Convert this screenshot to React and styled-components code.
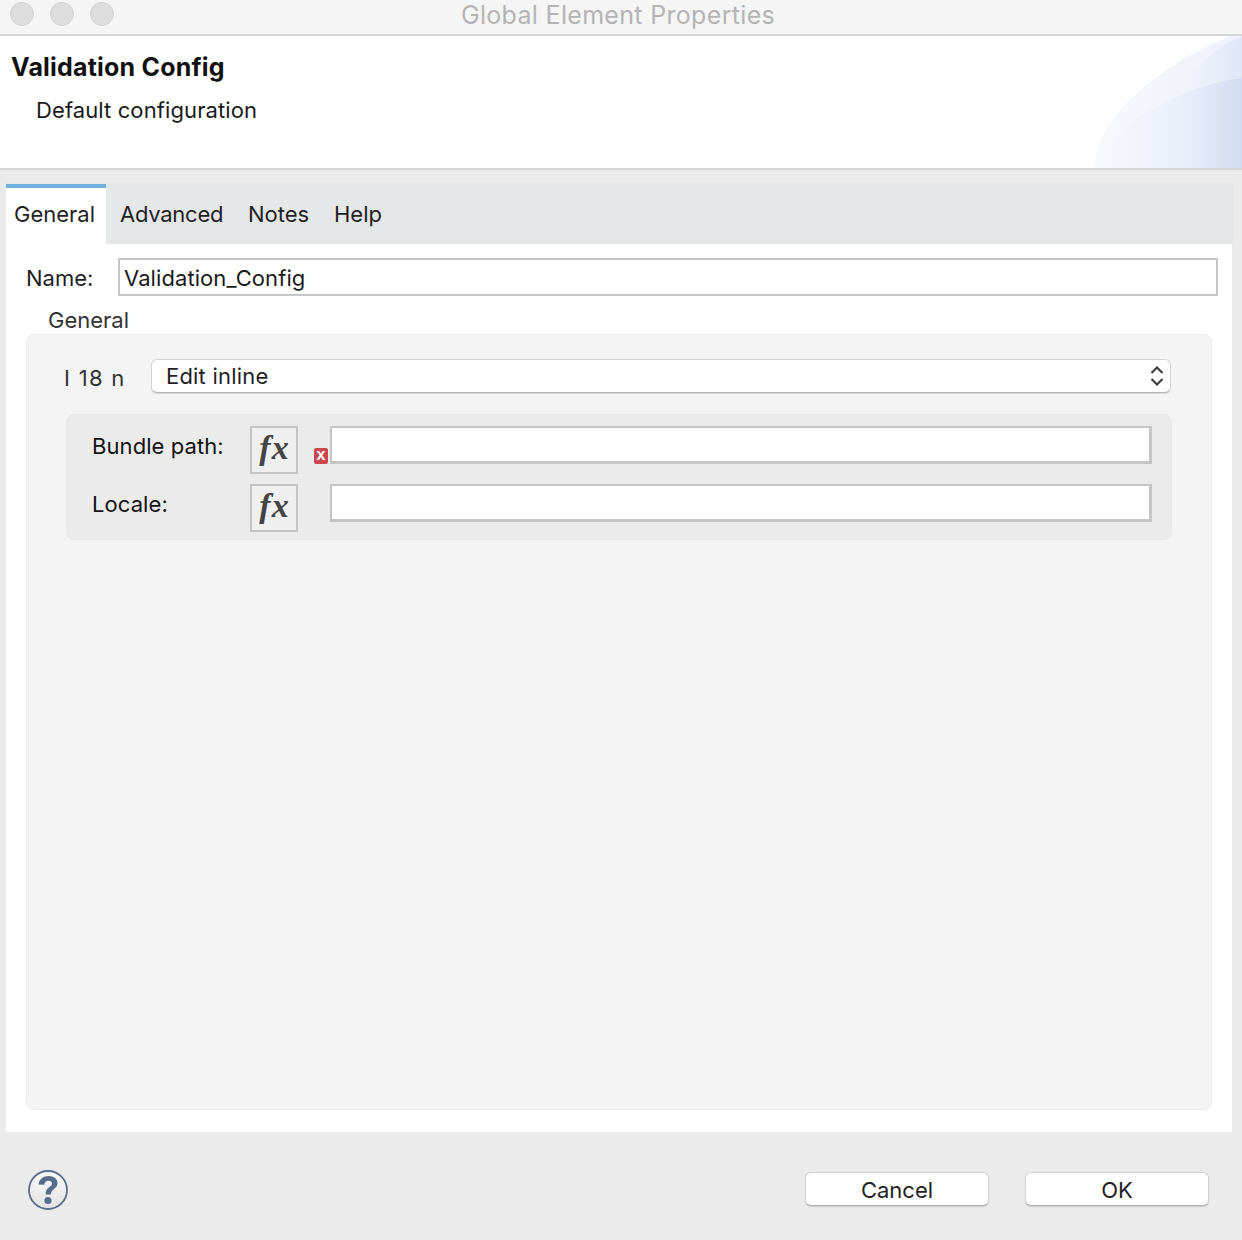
import React from 'react'
import styled, { createGlobalStyle } from 'styled-components'

const Global = createGlobalStyle`
	html, body {
		margin: 0;
		padding: 0;
		background: #ebebeb;
	}
	* {
		box-sizing: border-box;
	}
`

const Window = styled.div`
	width: 1242px;
	height: 1240px;
	display: flex;
	flex-direction: column;
	overflow: hidden;
	background: #ebebeb;
	font-family: Inter, "Liberation Sans", sans-serif;
	font-size: 22px;
	color: #1f1f1f;
`

const TitleBar = styled.div`
	position: relative;
	height: 36px;
	flex: none;
	display: flex;
	align-items: flex-start;
	gap: 16px;
	padding: 2px 0 0 10px;
	background: #f5f5f5;
	border-bottom: 2px solid #d6d6d6;
`

const Light = styled.span`
	width: 24px;
	height: 24px;
	border-radius: 50%;
	background: #dcdcdc;
	border: 1px solid #d2d2d2;
`

const WindowTitle = styled.div`
	position: absolute;
	left: 0;
	right: 6px;
	top: 0;
	text-align: center;
	font-size: 25px;
	line-height: 30px;
	letter-spacing: 0.32px;
	color: #b4b4b4;
`

const Header = styled.header`
	position: relative;
	height: 134px;
	flex: none;
	padding: 16px 12px 0;
	background: #fff;
	border-bottom: 2px solid #d4d4d4;
	overflow: hidden;
`

const Swoosh = styled.svg`
	position: absolute;
	right: 0;
	bottom: 0;
`

const Title = styled.h1`
	margin: 0 0 0 -1px;
	font-size: 25px;
	line-height: 30px;
	font-weight: 700;
	letter-spacing: 0.2px;
	color: #111;
`

const Subtitle = styled.p`
	margin: 13px 0 0 24px;
	font-size: 22px;
	line-height: 30px;
	letter-spacing: 0.1px;
	color: #1a1a1a;
`

const Main = styled.main`
	flex: none;
	margin: 12px 10px 0 6px;
	display: flex;
	flex-direction: column;
`

const TabStrip = styled.div`
	height: 62px;
	display: flex;
	align-items: flex-end;
	background: #e6e7e9;
	margin-right: -1px;
`

const Tab = styled.div`
	height: 60px;
	width: ${p => p.$width}px;
	padding: ${p => (p.$active ? '13px 0 0 8px' : '17px 0 0 0')};
	margin-left: ${p => p.$offset || 0}px;
	background: ${p => (p.$active ? '#fff' : 'transparent')};
	border-top: ${p => (p.$active ? '4px solid #6fb0dc' : 'none')};
	letter-spacing: ${p => p.$tracking || 0}px;
	line-height: 26px;
	white-space: nowrap;
`

const Panel = styled.section`
	height: 888px;
	padding: 14px 14px 0 20px;
	background: #fff;
`

const NameRow = styled.div`
	display: flex;
	align-items: center;
	height: 38px;
`

const NameLabel = styled.label`
	width: 92px;
	flex: none;
	padding-top: 1px;
`

const TextField = styled.div`
	flex: 1;
	height: 38px;
	padding: 0 4px;
	line-height: 36px;
	letter-spacing: 0.08px;
	background: #fff;
	border: 2px solid #c6c6c6;
	color: #1a1a1a;
`

const GroupLabel = styled.div`
	margin: 10px 0 0 22px;
	height: 26px;
	line-height: 28px;
	color: #333;
`

const Group = styled.div`
	height: 776px;
	margin: 2px 6px 0 0;
	padding: 24px 40px 0 37px;
	background: #f4f4f4;
	border: 1px solid #ececec;
	border-radius: 8px;
`

const SelectRow = styled.div`
	display: flex;
	align-items: center;
	height: 34px;
`

const SelectLabel = styled.span`
	width: 87px;
	flex: none;
	letter-spacing: 1.3px;
	padding-top: 4px;
	color: #333;
`

const Select = styled.div`
	flex: 1;
	height: 34px;
	display: flex;
	align-items: center;
	justify-content: space-between;
	padding: 0 6px 0 14px;
	letter-spacing: 0.2px;
	background: #fff;
	border-radius: 6px;
	border: 1px solid #d4d4d4;
	border-bottom-color: #b4b4b4;
	box-shadow: 0 1px 1px rgba(0, 0, 0, 0.12);
`

const Inset = styled.div`
	height: 126px;
	margin: 21px -1px 0 2px;
	padding: 11px 19px 0 25px;
	display: flex;
	flex-direction: column;
	gap: 10px;
	background: #ebebeb;
	border: 1px solid #e8e8e8;
	border-radius: 8px;
`

const FieldRow = styled.div`
	display: flex;
	align-items: flex-start;
	height: 48px;
`

const FieldLabel = styled.label`
	width: 158px;
	flex: none;
	padding-top: 1px;
	line-height: 38px;
	letter-spacing: 0.08px;
	color: #111;
`

const FxButton = styled.div`
	width: 48px;
	height: 48px;
	flex: none;
	display: flex;
	align-items: center;
	justify-content: center;
	background: #f0f0f0;
	border: 2px solid #c4c4c4;
	font-family: "Liberation Serif", serif;
	font-style: italic;
	font-weight: 700;
	font-size: 34px;
	letter-spacing: 1px;
	color: #444;
	padding: 0 0 4px 1px;
`

const ErrorSlot = styled.div`
	width: 32px;
	height: 38px;
	flex: none;
	display: flex;
	align-items: flex-end;
	padding-left: 16px;
`

const ErrorBadge = styled.span`
	width: 14px;
	height: 16px;
	display: flex;
	align-items: center;
	justify-content: center;
	background: #c9474f;
	border-radius: 2px;
	color: #fff;
	font-family: "Liberation Sans", sans-serif;
	font-weight: 700;
	font-size: 16px;
	line-height: 1;
	padding-bottom: 2px;
`

const Input = styled.div`
	flex: 1;
	height: 38px;
	background: #fff;
	border: 2px solid #c6c6c6;
	border-bottom-width: 3px;
	border-right-width: 3px;
`

const Footer = styled.footer`
	flex: 1;
	display: flex;
	align-items: flex-start;
	justify-content: space-between;
	padding: 38px 33px 0 28px;
`

const Buttons = styled.div`
	display: flex;
	gap: 36px;
	padding-top: 2px;
`

const Button = styled.button`
	width: 184px;
	height: 34px;
	padding: 1px 0 0;
	background: #fff;
	border: 1px solid #d2d2d2;
	border-bottom-color: #b4b4b4;
	border-radius: 6px;
	box-shadow: 0 1px 1px rgba(0, 0, 0, 0.15);
	font-family: inherit;
	font-size: 22px;
	color: #222;
`

const UpDown = () => (
	<svg width="14" height="22" viewBox="0 0 14 22" fill="none" stroke="#3f3f3f" strokeWidth="2.2">
		<path d="M1.5 8 L7 2.5 L12.5 8" />
		<path d="M1.5 14 L7 19.5 L12.5 14" />
	</svg>
)

const HelpIcon = () => (
	<svg width="40" height="40" viewBox="0 0 40 40">
		<defs>
			<linearGradient id="helpFill" x1="0" y1="0" x2="0" y2="1">
				<stop offset="0" stopColor="#fbfbfb" />
				<stop offset="1" stopColor="#e2e2e2" />
			</linearGradient>
		</defs>
		<circle cx="20" cy="20" r="19" fill="url(#helpFill)" stroke="#5a6c8c" strokeWidth="1.8" />
		<path
			d="M10.5 14.5 C11 9 15.5 6 20.5 6 C26 6 29.5 9 29.5 13 C29.5 18.8 23 18.8 23 24.5 L17.6 24.5 C17.6 17 24 17.2 24 13.6 C24 11.8 22.6 10.8 20.5 10.8 C18.2 10.8 16.6 12.2 16.3 14.8 Z"
			fill="#5a6c8c"
		/>
		<circle cx="20" cy="30.5" r="3.6" fill="#5a6c8c" />
	</svg>
)

const HeaderArt = () => (
	<Swoosh width="150" height="132" viewBox="0 0 150 132">
		<defs>
			<linearGradient id="artLight" x1="0" y1="0" x2="1" y2="0">
				<stop offset="0" stopColor="#f8f9fd" />
				<stop offset="1" stopColor="#eef1fa" />
			</linearGradient>
			<linearGradient id="artUpper" x1="0" y1="0" x2="1" y2="0">
				<stop offset="0" stopColor="#f2f4fb" />
				<stop offset="1" stopColor="#dfe6f6" />
			</linearGradient>
			<linearGradient id="artDark" x1="0" y1="0" x2="1" y2="0">
				<stop offset="0" stopColor="#f8f9fd" />
				<stop offset="0.6" stopColor="#e9eefa" />
				<stop offset="1" stopColor="#d1dbf1" />
			</linearGradient>
		</defs>
		<path d="M2 132 C6 100 20 80 41 61 C60 42 88 22 138 0 L150 0 L150 132 Z" fill="url(#artLight)" />
		<path d="M95 46 C104 30 120 14 150 0 L150 42 C130 44 110 50 95 56 Z" fill="url(#artUpper)" />
		<path d="M10 132 C13 118 18 104 26 96 C62 68 110 46 150 42 L150 132 Z" fill="url(#artDark)" />
	</Swoosh>
)

const BundleRow = ({ label, error }) => (
	<FieldRow>
		<FieldLabel>{label}</FieldLabel>
		<FxButton>fx</FxButton>
		<ErrorSlot>{error && <ErrorBadge>x</ErrorBadge>}</ErrorSlot>
		<Input />
	</FieldRow>
)

export default function App() {
	return (
		<Window>
			<Global />
			<TitleBar>
				<Light />
				<Light />
				<Light />
				<WindowTitle>Global Element Properties</WindowTitle>
			</TitleBar>
			<Header>
				<HeaderArt />
				<Title>Validation Config</Title>
				<Subtitle>Default configuration</Subtitle>
			</Header>
			<Main>
				<TabStrip>
					<Tab $active $width={100}>General</Tab>
					<Tab $offset={14} $width={128} $tracking={-0.25}>Advanced</Tab>
					<Tab $width={86}>Notes</Tab>
					<Tab $width={60}>Help</Tab>
				</TabStrip>
				<Panel>
					<NameRow>
						<NameLabel>Name:</NameLabel>
						<TextField>Validation_Config</TextField>
					</NameRow>
					<GroupLabel>General</GroupLabel>
					<Group>
						<SelectRow>
							<SelectLabel>I 18 n</SelectLabel>
							<Select>
								Edit inline
								<UpDown />
							</Select>
						</SelectRow>
						<Inset>
							<BundleRow label="Bundle path:" error />
							<BundleRow label="Locale:" />
						</Inset>
					</Group>
				</Panel>
			</Main>
			<Footer>
				<HelpIcon />
				<Buttons>
					<Button>Cancel</Button>
					<Button>OK</Button>
				</Buttons>
			</Footer>
		</Window>
	)
}
